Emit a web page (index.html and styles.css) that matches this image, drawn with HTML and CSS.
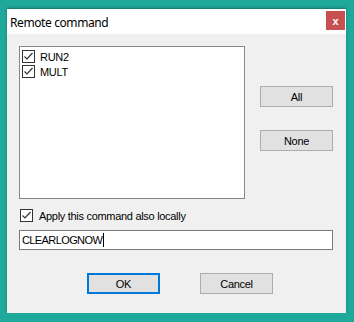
FILE: index.html
```html
<!DOCTYPE html>
<html lang="en">
<head>
    <meta charset="UTF-8">
    <title>Remote command</title>
    <link rel="stylesheet" href="styles.css">
</head>
<body>
    <div class="window">
        <div class="titlebar">
            <span class="title">Remote command</span>
            <span class="close">x</span>
        </div>

        <div class="content">
            <div class="top-row">
                <div class="listbox">
                    <label class="item"><span class="check on"></span>RUN2</label>
                    <label class="item"><span class="check on"></span>MULT</label>
                </div>
                <div class="side-buttons">
                    <button class="btn">All</button>
                    <button class="btn">None</button>
                </div>
            </div>

            <label class="apply"><span class="check on"></span>Apply this command also locally</label>

            <div class="textbox">CLEARLOGNOW<span class="caret"></span></div>

            <div class="footer">
                <button class="btn default">OK</button>
                <button class="btn">Cancel</button>
            </div>
        </div>
    </div>
</body>
</html>
```

FILE: styles.css
```css
body {
    margin: 0;
    padding: 8px 0 0 7px;
    background-color: #1fa99b;
    font-family: 'Liberation Sans', Arial, sans-serif;
    font-size: 11px;
    letter-spacing: -0.3px;
    color: #000;
}
.window {
    width: 339px;
    height: 305px;
    box-sizing: border-box;
    background-color: #f0f0f0;
    border-top: 1px solid #1c7d73;
    box-shadow: 0 0 3px rgba(0, 0, 0, 0.25);
    display: flex;
    flex-direction: column;
}
.titlebar {
    height: 25px;
    background-color: #fff;
    display: flex;
    align-items: flex-start;
    justify-content: space-between;
}
.title {
    font-family: 'Noto Sans', sans-serif;
    font-size: 12px;
    letter-spacing: -0.4px;
    margin: 5px 0 0 3px;
}
.close {
    width: 19px;
    height: 19px;
    margin: 2px 1px 0 0;
    background-color: #c75050;
    color: #fff;
    font-weight: bold;
    font-size: 11px;
    display: flex;
    align-items: center;
    justify-content: center;
}
.content {
    padding: 12px 0 0 12px;
}
.top-row {
    display: flex;
}
.listbox {
    width: 226px;
    height: 153px;
    box-sizing: border-box;
    background-color: #fff;
    border: 1px solid #828790;
    padding: 2px 0 0 2px;
}
.item {
    display: flex;
    align-items: center;
    height: 15px;
}
.check {
    width: 13px;
    height: 13px;
    box-sizing: border-box;
    border: 1px solid #333;
    background-color: #fff;
    margin-right: 5px;
    flex-shrink: 0;
}
.check.on {
    background-image: url("data:image/svg+xml,%3Csvg xmlns='http://www.w3.org/2000/svg' width='11' height='11'%3E%3Cpath d='M1.5 5.5l2.5 2.5 5.5-6' fill='none' stroke='%23333' stroke-width='1.2'/%3E%3C/svg%3E");
    background-repeat: no-repeat;
}
.side-buttons {
    display: flex;
    flex-direction: column;
    gap: 23px;
    margin: 40px 0 0 15px;
}
.btn {
    width: 73px;
    height: 21px;
    box-sizing: border-box;
    background-color: #e1e1e1;
    border: 1px solid #adadad;
    font-family: 'Liberation Sans', Arial, sans-serif;
    font-size: 11px;
    letter-spacing: -0.3px;
    color: #000;
    padding: 0;
}
.btn.default {
    border: 2px solid #0078d7;
}
.apply {
    display: flex;
    align-items: center;
    height: 13px;
    margin: 10px 0 0 1px;
}
.apply .check {
    margin-right: 6px;
}
.textbox {
    width: 314px;
    height: 20px;
    box-sizing: border-box;
    margin-top: 8px;
    background-color: #fff;
    border: 1px solid #7a7a7a;
    padding: 0 0 0 2px;
    letter-spacing: -0.6px;
    display: flex;
    align-items: center;
}
.caret {
    width: 1px;
    height: 14px;
    background-color: #000;
    margin-left: 1px;
}
.footer {
    display: flex;
    gap: 40px;
    margin: 23px 0 0 68px;
}
```
